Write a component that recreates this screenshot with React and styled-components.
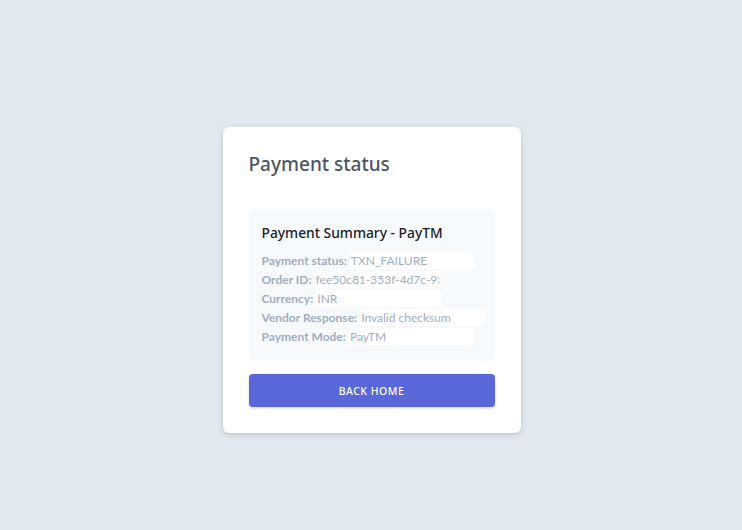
import React from "react";
import styled, { createGlobalStyle } from "styled-components";

const Global = createGlobalStyle`
  html, body { margin: 0; padding: 0; }
  body {
    background: #e2e8f0;
    font-family: "Noto Sans", "Open Sans", sans-serif;
    -webkit-font-smoothing: antialiased;
  }
`;

const Page = styled.div`
  min-height: 530px;
  display: flex;
  flex-direction: column;
  align-items: center;
  padding-top: 127px;
  padding-left: 1px;
  box-sizing: border-box;
`;

const Card = styled.div`
  width: 298px;
  box-sizing: border-box;
  background: #fff;
  border-radius: 6px;
  box-shadow: 0 2px 6px rgba(0, 0, 0, 0.12), 0 1px 2px rgba(0, 0, 0, 0.06);
  padding: 23px 26px 26px;
  display: flex;
  flex-direction: column;
`;

const Title = styled.h2`
  margin: 0;
  font-size: 19px;
  line-height: 28px;
  font-weight: 500;
  color: #4a5568;
`;

const Summary = styled.div`
  margin-top: 31px;
  background: #f7fafc;
  border-radius: 6px;
  padding: 13px 13px 15px;
  display: flex;
  flex-direction: column;
`;

const SummaryTitle = styled.h3`
  margin: 0 0 7px;
  font-size: 13.8px;
  line-height: 22px;
  font-weight: 500;
  color: #1a202c;
`;

const Row = styled.div`
  display: flex;
  align-items: center;
  height: 19px;
  font-family: "Lato", "Noto Sans", sans-serif;
  font-size: 12px;
  color: #a0aec0;
  white-space: nowrap;
`;

const Label = styled.span`
  font-weight: 700;
  margin-right: 3px;
`;

const Value = styled.input`
  width: 125px;
  height: 17px;
  box-sizing: border-box;
  border: none;
  outline: none;
  background: #fff;
  padding: 0 1px;
  font: inherit;
  font-size: 12px;
  color: #a0aec0;
`;

const Button = styled.button`
  margin-top: 13px;
  height: 33px;
  border: none;
  border-radius: 4px;
  background: #5a67d8;
  color: #fff;
  font-family: inherit;
  font-size: 10.5px;
  font-weight: 500;
  letter-spacing: 0.5px;
  text-transform: uppercase;
  box-shadow: 0 1px 3px rgba(0, 0, 0, 0.18);
  cursor: pointer;
`;

const rows = [
  ["Payment status:", "TXN_FAILURE"],
  ["Order ID:", "fee50c81-353f-4d7c-9349-0b0a2d1c"],
  ["Currency:", "INR"],
  ["Vendor Response:", "Invalid checksum"],
  ["Payment Mode:", "PayTM"],
];

export default function App() {
  return (
    <>
      <Global />
      <Page>
        <Card>
          <Title>Payment status</Title>
          <Summary>
            <SummaryTitle>Payment Summary - PayTM</SummaryTitle>
            {rows.map(([l, v]) => (
              <Row key={l}>
                <Label>{l}</Label>
                <Value readOnly value={v} />
              </Row>
            ))}
          </Summary>
          <Button>Back Home</Button>
        </Card>
      </Page>
    </>
  );
}
